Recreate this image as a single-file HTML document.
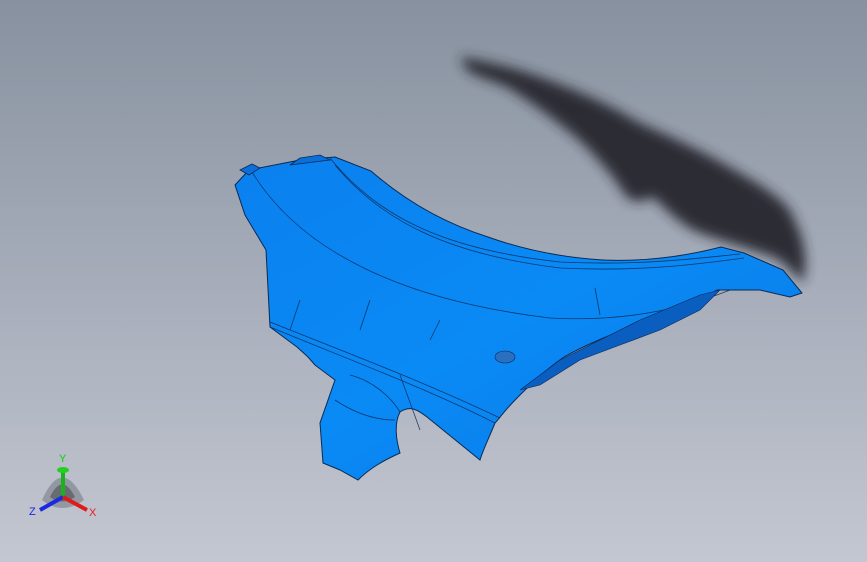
<!DOCTYPE html>
<html><head><meta charset="utf-8"><style>
html,body{margin:0;padding:0}
body{width:867px;height:562px;overflow:hidden;background:linear-gradient(180deg,#87919f 0%,#a3aab7 45%,#c3c7d1 100%);font-family:"Liberation Sans",sans-serif}
svg{position:absolute;left:0;top:0}
</style></head><body>
<svg width="867" height="562" viewBox="0 0 867 562">
<defs>
<filter id="b" x="-20%" y="-20%" width="140%" height="140%"><feGaussianBlur stdDeviation="6"/></filter>
<linearGradient id="g" x1="0" y1="0" x2="1" y2="1">
<stop offset="0" stop-color="#0a80ee"/><stop offset="0.5" stop-color="#0a8af5"/><stop offset="1" stop-color="#0a78e4"/></linearGradient>
</defs>
<path filter="url(#b)" fill="#25282d" opacity="0.95" d="M460,57 C490,62 515,68 540,77 C590,95 615,108 640,123 C690,145 715,158 740,173 C770,190 790,205 793,217 C805,240 808,260 803,283 C795,275 785,262 773,257 C740,245 710,238 693,230 C675,220 662,205 653,197 C640,203 632,202 627,197 C618,185 612,175 607,170 C590,150 580,140 567,130 C540,108 520,95 507,87 C490,80 475,76 467,70 Z"/>
<path fill="url(#g)" stroke="#0a2a55" stroke-width="1" d="M235,185 L249,170 L300,160 L335,157 L371,171 C410,205 450,225 488,237 C530,252 570,258 603,260 C650,262 690,255 721,247 L744,253 L783,270 L802,293 L790,297 L760,290 L717,290 C690,305 665,315 641,323 C610,335 585,345 564,357 C545,370 530,385 518,397 C505,410 498,420 495,423 C488,440 483,450 480,460 L427,417 C418,410 410,405 400,412 C394,423 396,440 400,453 C380,462 368,470 358,480 L340,470 L323,463 L320,423 L335,380 L315,365 L308,357 L297,347 L270,327 L266,250 L245,215 Z"/>
<g fill="none" stroke="#0a2a55" stroke-width="0.8" opacity="0.85">
<path d="M252,172 C300,250 400,300 550,318 C620,322 680,310 730,290"/>
<path d="M330,158 C380,220 450,250 560,262 C640,266 700,258 740,254"/>
<path d="M335,165 C385,225 455,255 560,268 C640,272 700,264 744,258"/>
<path d="M270,327 C350,360 430,390 495,423"/>
<path d="M270,322 C340,350 420,380 500,418"/>
<path d="M300,300 L290,330"/><path d="M370,300 L360,330"/><path d="M440,320 L430,340"/>
<path d="M595,288 L600,315"/><path d="M350,375 C370,380 390,395 400,412"/>
<path d="M400,375 L420,430"/><path d="M335,400 C350,410 370,420 395,420"/>
</g>
<g fill="#0a5ec0" stroke="#0a2a55" stroke-width="0.6">
<path d="M520,390 L560,360 L600,340 L640,320 L700,295 L720,290 L700,310 L660,330 L620,345 L580,360 L540,385 Z"/>
<ellipse cx="505" cy="357" rx="10" ry="6" fill="#2a6fc0"/>
</g>
<g fill="#0a6fd8" stroke="#0a2a55" stroke-width="0.8">
<path d="M240,170 L252,164 L260,168 L249,175 Z"/><path d="M290,165 L300,158 L320,155 L330,160 Z"/>
</g>
</svg>
<svg width="867" height="562" viewBox="0 0 867 562">
<path d="M42,500 Q62,455 84,500 Q62,516 42,500 Z" fill="#6a6f78" opacity="0.5"/>
<path d="M50,497 Q62,472 75,497 Q62,506 50,497 Z" fill="#4a4e55" opacity="0.6"/>
<rect x="61" y="470" width="4" height="28" fill="#1bb31b"/>
<ellipse cx="63" cy="470" rx="6" ry="3" fill="#22d022"/>
<path d="M63,497 L40,510" stroke="#1a2ae0" stroke-width="4"/>
<path d="M63,497 L87,510" stroke="#e01a1a" stroke-width="4"/>
<text x="59" y="462" font-size="11" fill="#11cc11">Y</text>
<text x="29" y="515" font-size="11" fill="#1a22ee">Z</text>
<text x="89" y="516" font-size="11" fill="#ee1a1a">X</text>
</svg>
</body></html>
